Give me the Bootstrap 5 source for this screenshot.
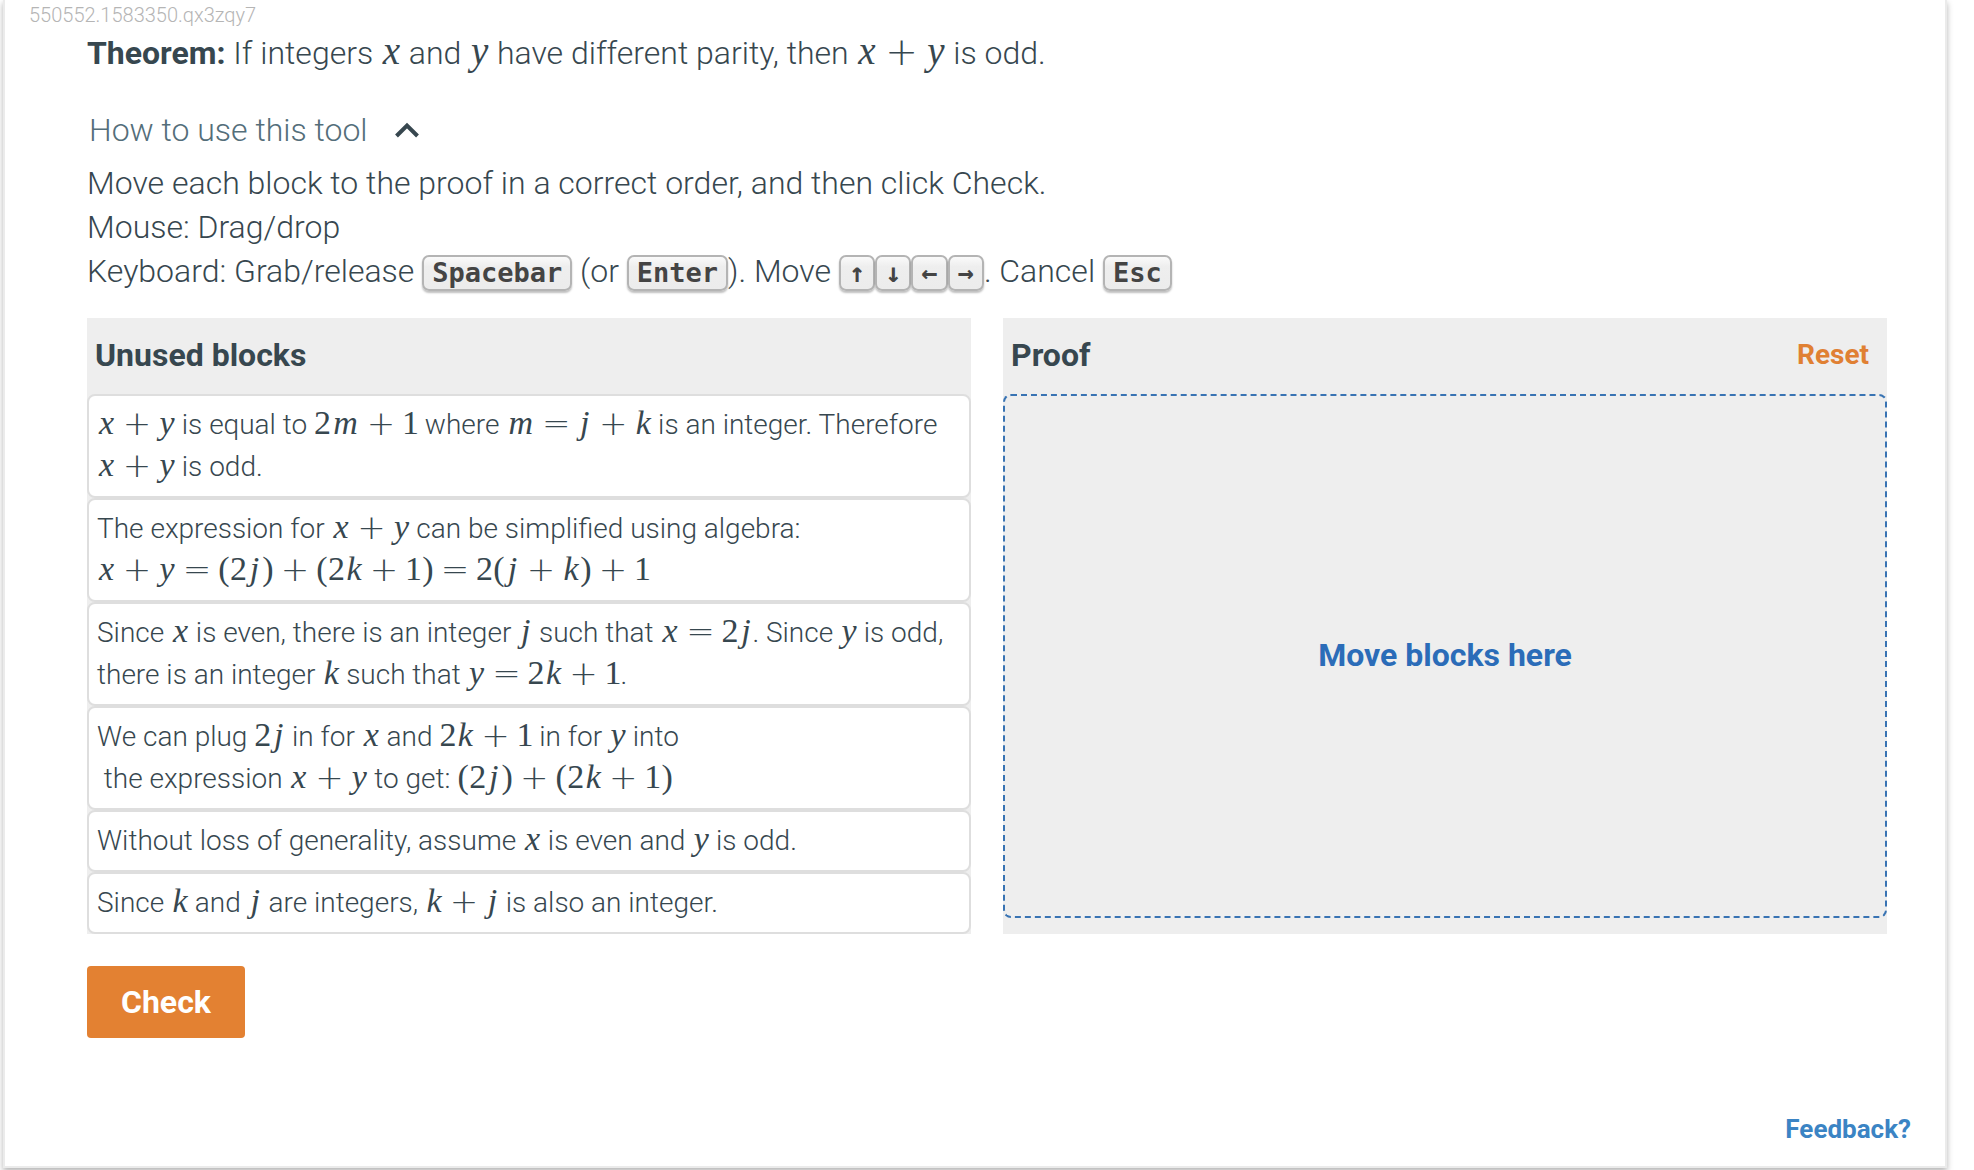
<!DOCTYPE html>
<html lang="en">
<head>
<meta charset="utf-8">
<meta name="viewport" content="width=device-width, initial-scale=1">
<title>Proof blocks</title>
<link href="https://cdn.jsdelivr.net/npm/bootstrap@5.3.0/dist/css/bootstrap.min.css" rel="stylesheet">
<style>
  body { font: 300 32px/44px Roboto, sans-serif; color: #37474f; background: #fff; }
  b, h2, .btn { font-weight: 700; }
  .activity { margin: 0 27px 2px 3px; min-height: calc(100vh - 2px); border: 2px solid #ebebeb; border-top: 0; box-shadow: 0 3px 6px rgba(0,0,0,.3); }
  .activity-id { font-size: 20px; line-height: 30px; padding-left: 24px; color: #b5b5b5; }
  .activity-body { padding: 1px 58px 0 82px; }
  .howto { font-weight: 300; font-size: 32px; line-height: 44px; color: #546e7a; margin: 33px 0 9px; padding-left: 2px; gap: 27px; }
  .keycap { display: inline-block; font: 700 27px/32px "DejaVu Sans Mono", monospace; color: #444; padding: 0 8px; border: 2px solid #b4b4b4; border-radius: 7px; background: linear-gradient(#fafafa, #eee 30%, #ececec); box-shadow: 0 2px 2px rgba(0,0,0,.25); }
  .tools { gap: 32px; margin-top: 25px; }
  .panel { flex: 1 1 0; background: #eee; }
  .panel-head { height: 76px; padding: 0 18px 2px 8px; }
  .panel-head h2 { font-size: 32px; line-height: 44px; }
  .piece { border: 2px solid #dedede; border-radius: 8px; background: #fff; font-size: 28px; line-height: 42px; padding: 8px; cursor: grab; }
  .target { border: 2px dashed #3873b3; border-radius: 8px; color: #2b6cb8; font-weight: 700; margin-bottom: 16px; padding-bottom: 2px; }
  .btn-reset { font-size: 28px; line-height: 42px; color: #e08033; }
  .btn-submit { font-size: 32px; line-height: 44px; padding: 14px 34px; margin-top: 32px; border: 0; border-radius: 4px; color: #fff; background: #e38132; }
  .btn-submit:hover { color: #fff; background: #cf7226; }
  .feedback { font-size: 26px; line-height: 36px; font-weight: 700; color: #3b84c4; text-decoration: none; padding: 0 34px 19px; }

  /* formulas */
  .fm { font: 400 34px/36px "Liberation Serif", serif; white-space: nowrap; margin-right: -1px; }
  .fm i, .fm u, .fm .paren { display: inline-block; text-align: center; text-decoration: none; }
  .fm i { width: 18px; }
  .fm i.x { width: 19px; }
  .fm i.j { width: 15px; }
  .fm i.m { width: 29px; }
  .fm .paren { width: 12px; }
  .fm u { font: 200 34px/36px "DejaVu Sans", sans-serif; width: 42px; vertical-align: -1px; }
  .statement .fm { font-size: 39px; }
  .statement .fm i { width: 21px; }
  .statement .fm u { font-size: 39px; width: 48px; }
</style>
<script src="https://cdn.jsdelivr.net/npm/bootstrap@5.3.0/dist/js/bootstrap.bundle.min.js"></script>
</head>
<body>
<main class="activity d-flex flex-column">
  <div class="activity-id">550552.1583350.qx3zqy7</div>
  <div class="activity-body">
    <p class="statement mb-0"><b>Theorem:</b> If integers <span class="fm"><i class="x">x</i></span> and <span class="fm"><i>y</i></span> have different parity, then <span class="fm"><i class="x">x</i><u>+</u><i>y</i></span> is odd.</p>

    <button type="button" class="howto btn d-flex align-items-center border-0 py-0 pe-0" data-bs-toggle="collapse" data-bs-target="#help" aria-expanded="true">
      How to use this tool
      <svg width="24" height="16" viewBox="0 0 24 16" fill="none" stroke="#37474f" stroke-width="4" aria-hidden="true"><path d="M1.500 14 12 3.500 22.500 14"/></svg>
    </button>
    <div id="help" class="collapse show">
      <div>Move each block to the proof in a correct order, and then click Check.</div>
      <div>Mouse: Drag/drop</div>
      <div>Keyboard: Grab/release <span class="keycap">Spacebar</span> (or <span class="keycap">Enter</span>). Move <span class="keycap">↑</span><span class="keycap">↓</span><span class="keycap">←</span><span class="keycap">→</span>. Cancel <span class="keycap">Esc</span></div>
    </div>

    <div class="tools d-flex">
      <section class="panel">
        <div class="panel-head d-flex align-items-center"><h2 class="m-0">Unused blocks</h2></div>
        <ul class="list-unstyled m-0">
          <li class="piece" draggable="true"><span class="fm"><i class="x">x</i><u>+</u><i>y</i></span> is equal to <span class="fm">2<i class="m">m</i><u>+</u>1</span> where <span class="fm"><i class="m">m</i><u>=</u><i class="j">j</i><u>+</u><i>k</i></span> is an integer. Therefore <span class="fm"><i class="x">x</i><u>+</u><i>y</i></span> is odd.</li>
          <li class="piece" draggable="true">The expression for <span class="fm"><i class="x">x</i><u>+</u><i>y</i></span> can be simplified using algebra:<br><span class="fm"><i class="x">x</i><u>+</u><i>y</i><u>=</u><span class="paren">(</span>2<i class="j">j</i><span class="paren">)</span><u>+</u><span class="paren">(</span>2<i>k</i><u>+</u>1<span class="paren">)</span><u>=</u>2<span class="paren">(</span><i class="j">j</i><u>+</u><i>k</i><span class="paren">)</span><u>+</u>1</span></li>
          <li class="piece" draggable="true">Since <span class="fm"><i class="x">x</i></span> is even, there is an integer <span class="fm"><i class="j">j</i></span> such that <span class="fm"><i class="x">x</i><u>=</u>2<i class="j">j</i></span>. Since <span class="fm"><i>y</i></span> is odd, there is an integer <span class="fm"><i>k</i></span> such that <span class="fm"><i>y</i><u>=</u>2<i>k</i><u>+</u>1</span>.</li>
          <li class="piece" draggable="true">We can plug <span class="fm">2<i class="j">j</i></span> in for <span class="fm"><i class="x">x</i></span> and <span class="fm">2<i>k</i><u>+</u>1</span> in for <span class="fm"><i>y</i></span> into<br>&nbsp;the expression <span class="fm"><i class="x">x</i><u>+</u><i>y</i></span> to get: <span class="fm"><span class="paren">(</span>2<i class="j">j</i><span class="paren">)</span><u>+</u><span class="paren">(</span>2<i>k</i><u>+</u>1<span class="paren">)</span></span></li>
          <li class="piece" draggable="true">Without loss of generality, assume <span class="fm"><i class="x">x</i></span> is even and <span class="fm"><i>y</i></span> is odd.</li>
          <li class="piece" draggable="true">Since <span class="fm"><i>k</i></span> and <span class="fm"><i class="j">j</i></span> are integers, <span class="fm"><i>k</i><u>+</u><i class="j">j</i></span> is also an integer.</li>
        </ul>
      </section>
      <section class="panel d-flex flex-column">
        <div class="panel-head d-flex align-items-center justify-content-between">
          <h2 class="m-0">Proof</h2>
          <button type="button" class="btn btn-reset border-0 p-0">Reset</button>
        </div>
        <div class="target flex-grow-1 d-flex align-items-center justify-content-center">Move blocks here</div>
      </section>
    </div>
    <button type="button" class="btn btn-submit d-block">Check</button>
  </div>
  <a class="feedback mt-auto align-self-end" href="#feedback">Feedback?</a>
</main>
</body>
</html>
